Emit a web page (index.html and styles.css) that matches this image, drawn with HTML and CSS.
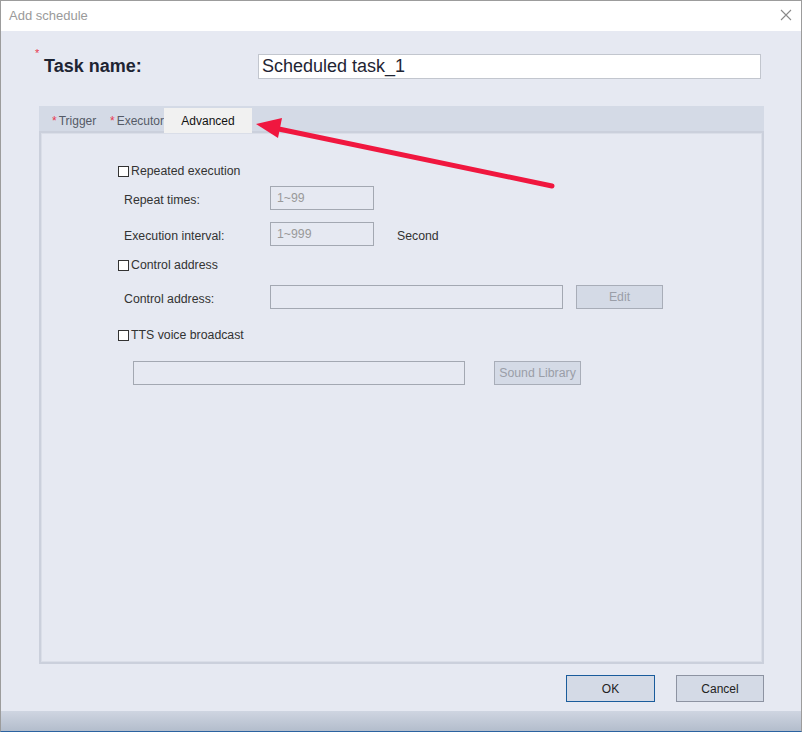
FILE: index.html
```html
<!DOCTYPE html>
<html lang="en">
<head>
    <meta charset="UTF-8">
    <title>Add schedule</title>
    <link rel="stylesheet" href="styles.css">
</head>
<body>

    <div class="window">
        <div class="titlebar">
            <span class="title">Add schedule</span>
            <span class="close">
                <svg width="12" height="12" viewBox="0 0 12 12"><path d="M1 1L11 11M11 1L1 11" stroke="#8a8a8a" stroke-width="1.1" fill="none"/></svg>
            </span>
        </div>

        <div class="main">
            <div class="task-row">
                <div class="task-label"><i class="req">*</i>Task name:</div>
                <div class="task-input">Scheduled task_1</div>
            </div>

            <div class="tabs">
                <span class="tab tab-trigger"><i>*</i>Trigger</span>
                <span class="tab tab-executor"><i>*</i>Executor</span>
                <span class="tab current">Advanced</span>
            </div>

            <div class="panel">
                <div class="check-row first">
                    <span class="box"></span>Repeated execution
                </div>
                <div class="form-row r-repeat">
                    <span class="label">Repeat times:</span>
                    <span class="field small">1~99</span>
                </div>
                <div class="form-row r-interval">
                    <span class="label">Execution interval:</span>
                    <span class="field small">1~999</span>
                    <span class="unit">Second</span>
                </div>
                <div class="check-row r-ctrl">
                    <span class="box"></span>Control address
                </div>
                <div class="form-row r-address">
                    <span class="label">Control address:</span>
                    <span class="field wide"></span>
                    <span class="btn-dis edit">Edit</span>
                </div>
                <div class="check-row r-tts">
                    <span class="box"></span>TTS voice broadcast
                </div>
                <div class="form-row r-sound">
                    <span class="field tts"></span>
                    <span class="btn-dis sound">Sound Library</span>
                </div>
            </div>

            <div class="footer">
                <span class="btn ok">OK</span>
                <span class="btn cancel">Cancel</span>
            </div>
        </div>

        <div class="statusbar"></div>

        <!-- annotation arrow -->
        <svg class="arrow" width="802" height="732" viewBox="0 0 802 732">
            <line x1="552" y1="186" x2="274" y2="128" stroke="#f0173f" stroke-width="5" stroke-linecap="round"/>
            <polygon points="256,124 282,118 278,138" fill="#f0173f"/>
        </svg>
    </div>

</body>
</html>
```

FILE: styles.css
```css
html,body{
    margin: 0;padding: 0;
}
body{
    font-family: "Liberation Sans", Arial, sans-serif;font-size: 12px;color: #333;
}
.window{
    width: 802px;height: 732px;box-sizing: border-box;position: relative;overflow: hidden;
    border: 1px solid #9c9c9c;border-bottom: 1px solid #2b62a0;background: #e6e9f2;
}
.titlebar{
    height: 30px;background: #fff;display: flex;align-items: center;justify-content: space-between;
    padding: 0 9px 2px 8px;box-sizing: border-box;
}
.titlebar .title{
    font-size: 13px;color: #9a9a9a;
}
.titlebar .close{
    display: flex;margin-top: 0;
}
.main{
    height: 680px;box-sizing: border-box;background: #e6e9f2;padding-top: 23px;
}

/* task name */
.task-row{
    display: flex;align-items: center;height: 25px;padding-left: 34px;
}
.task-label{
    width: 223px;font-size: 18px;font-weight: bold;color: #1e2433;position: relative;padding-left: 9px;
    box-sizing: border-box;
}
.task-label .req{
    position: absolute;left: 0;top: -9px;font-style: normal;font-size: 11px;font-weight: normal;color: #e8384f;
}
.task-input{
    width: 503px;height: 25px;box-sizing: border-box;background: #fff;border: 1px solid #c2c6ce;
    font-size: 18px;color: #1e2433;line-height: 23px;padding-left: 3px;
}

/* tabs */
.tabs{
    margin: 27px 0 0 38px;width: 725px;height: 25px;background: #d4dae6;display: flex;
    padding-left: 13px;box-sizing: border-box;
}
.tab{
    color: #555a66;line-height: 31px;white-space: nowrap;overflow: hidden;
}
.tab i{
    font-style: normal;color: #e8384f;margin-right: 2px;
}
.tab-trigger{
    width: 58px;
}
.tab-executor{
    width: 54px;
}
.tab.current{
    width: 88px;height: 25px;margin-top: 2px;background: #f1f1f1;color: #111;text-align: center;
    line-height: 27px;position: relative;z-index: 1;
}

/* panel */
.panel{
    margin-left: 38px;width: 725px;height: 533px;box-sizing: border-box;border: 2px solid #cbd0dc;
    box-shadow: inset 0 0 0 1px #dadee8;font-size: 12.3px;
}
.check-row{
    display: flex;align-items: center;height: 16px;padding-left: 77px;color: #333;
}
.check-row .box{
    width: 11px;height: 11px;box-sizing: border-box;border: 1px solid #333;background: #fff;margin-right: 2px;
}
.check-row.first{
    margin-top: 30px;
}
.r-ctrl{
    margin-top: 11px;
}
.r-tts{
    margin-top: 18px;
}
.form-row{
    display: flex;align-items: center;height: 24px;padding-left: 83px;
}
.r-repeat{
    margin-top: 7px;
}
.r-interval{
    margin-top: 12px;
}
.r-address{
    margin-top: 12px;
}
.r-sound{
    margin-top: 18px;padding-left: 92px;
}
.form-row .label{
    width: 146px;color: #333;padding-top: 4px;
}
.unit{
    margin-left: 23px;padding-top: 4px;
}
.field{
    height: 24px;box-sizing: border-box;border: 1px solid #a3a8b2;color: #999;line-height: 22px;padding-left: 6px;
}
.field.small{
    width: 104px;
}
.field.wide{
    width: 293px;
}
.field.tts{
    width: 332px;
}
.btn-dis{
    width: 87px;height: 24px;box-sizing: border-box;border: 1px solid #a8adb8;background: #d4dae6;
    color: #9a9ea8;text-align: center;line-height: 23px;
}
.btn-dis.edit{
    margin-left: 13px;
}
.btn-dis.sound{
    margin-left: 29px;
}

/* footer */
.footer{
    display: flex;justify-content: flex-end;padding-right: 37px;margin-top: 11px;
}
.btn{
    width: 89px;height: 27px;box-sizing: border-box;background: #d4dae6;text-align: center;line-height: 27px;
    color: #222;border: 1px solid #8d93a2;margin-left: 21px;
}
.btn.ok{
    border-color: #1a5c9c;
}
.btn.cancel{
    width: 88px;
}
.statusbar{
    height: 20px;background: linear-gradient(#cfd5e1, #b3bdcc);
}
.arrow{
    position: absolute;left: -1px;top: -1px;pointer-events: none;
}
```
